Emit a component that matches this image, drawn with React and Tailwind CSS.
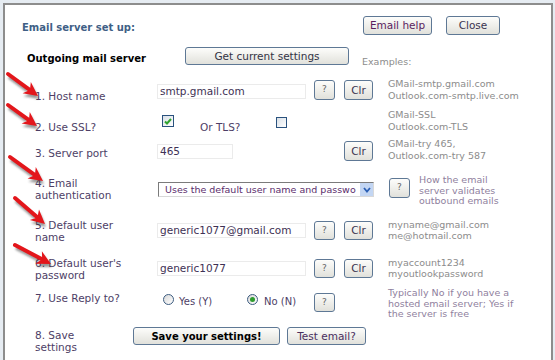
import { twMerge } from "tailwind-merge";

function Btn({ className = "", children }) {
  return (
    <div
      className={twMerge(
        "flex shrink-0 items-center justify-center rounded-[3px] border border-[#5e7895] bg-linear-to-b from-[#fdfdfb] to-[#e1e1db] text-[10.5px] leading-none text-[#3b3450]",
        className
      )}
    >
      {children}
    </div>
  );
}

function Field({ className = "", children }) {
  return (
    <div
      className={twMerge(
        "flex h-[15px] shrink-0 items-center border border-[#ebebeb] bg-white pl-[2px] text-[10.5px] leading-none text-[#3e3154]",
        className
      )}
    >
      {children}
    </div>
  );
}

function Label({ className = "", children }) {
  return (
    <div
      className={twMerge(
        "ml-[30px] w-[122px] shrink-0 text-[10.5px] leading-[12px] text-[#4d3e66]",
        className
      )}
    >
      {children}
    </div>
  );
}

function Note({ className = "", lines }) {
  return (
    <div
      className={twMerge(
        "shrink-0 whitespace-nowrap text-[9.5px] leading-[11.5px] text-[#8c8c8c]",
        className
      )}
    >
      {lines.map((l) => (
        <div key={l}>{l}</div>
      ))}
    </div>
  );
}

function Check({ checked, className = "" }) {
  return (
    <div
      className={twMerge(
        "flex h-[12px] w-[12px] shrink-0 items-center justify-center border border-[#2a527e] bg-linear-to-br from-[#d9e0e7] to-white",
        className
      )}
    >
      {checked && (
        <svg width="8" height="7" viewBox="0 0 8 7">
          <path d="M1 3.5 L3 5.5 L7 1" stroke="#2fa32f" strokeWidth="2" fill="none" />
        </svg>
      )}
    </div>
  );
}

function Radio({ checked }) {
  return (
    <div className="flex h-[11px] w-[11px] shrink-0 items-center justify-center rounded-full border border-[#3c5c80] bg-linear-to-br from-[#d8d8d8] to-white">
      {checked && <div className="h-[5px] w-[5px] rounded-full bg-[#2e9c2e]" />}
    </div>
  );
}

// red callout arrow, tail -> tip, with a soft shadow under it
function Arrow({ x1, y1, x2, y2 }) {
  const dx = x2 - x1;
  const dy = y2 - y1;
  const len = Math.hypot(dx, dy);
  const ux = dx / len;
  const uy = dy / len;
  const px = -uy;
  const py = ux;
  const hl = 14;
  const hw = 7;
  const bx = x2 - ux * hl;
  const by = y2 - uy * hl;
  const head = (ox, oy) =>
    `${x2 + ox},${y2 + oy} ${bx + px * hw + ox},${by + py * hw + oy} ${bx + ux * 4 + ox},${by + uy * 4 + oy} ${bx - px * hw + ox},${by - py * hw + oy}`;
  return (
    <g>
      <g filter="url(#blur)" opacity="0.5">
        <line x1={x1 + 1} y1={y1 + 3} x2={bx + 1} y2={by + 3} stroke="#333" strokeWidth="3.5" />
        <polygon points={head(1, 3)} fill="#333" />
      </g>
      <line x1={x1} y1={y1} x2={bx + ux * 5} y2={by + uy * 5} stroke="#e3161b" strokeWidth="4" strokeLinecap="round" />
      <polygon points={head(0, 0)} fill="#e3161b" />
    </g>
  );
}

const arrows = [
  [8, 74, 38, 96],
  [8, 105, 37, 126],
  [10, 157, 43, 181],
  [15, 198, 45, 224],
  [15, 245, 51, 264],
];

export default function App() {
  return (
    <div className="relative h-[360px] w-[555px] overflow-hidden bg-[#e6ecf2] pl-[3px] pr-[2px] pt-[3px] font-['DejaVu_Sans',Verdana,sans-serif]">
      <div className="h-full border-x-2 border-t-2 border-[#8d8d8d] bg-white pt-[11px]">
        {/* header */}
        <div className="flex h-[31px]">
          <div className="ml-[17px] mt-[6px] w-[341px] text-[10px] font-bold leading-[12px] text-[#3f5f86]">
            Email server set up:
          </div>
          <Btn className="h-[19px] w-[69px] text-[#5a1d5e]">Email help</Btn>
          <Btn className="ml-[14px] h-[19px] w-[54px]">Close</Btn>
        </div>

        {/* outgoing */}
        <div className="flex h-[31px]">
          <div className="ml-[22px] mt-[6px] w-[158px] text-[10px] font-bold leading-[12px] text-black">
            Outgoing mail server
          </div>
          <Btn className="h-[18px] w-[164px] text-[#333344]">Get current settings</Btn>
          <div className="ml-[13px] mt-[9px] text-[9.5px] leading-[12px] text-[#8c8c8c]">Examples:</div>
        </div>

        {/* 1 */}
        <div className="flex h-[34px]">
          <Label className="mt-[12px]">1. Host name</Label>
          <Field className="mt-[6px] w-[149px]">smtp.gmail.com</Field>
          <Btn className="ml-[8px] mt-[2px] h-[20px] w-[21px] text-[9px] text-[#666]">?</Btn>
          <Btn className="ml-[9px] mt-[2px] h-[20px] w-[29px]">Clr</Btn>
          <Note className="ml-[15px]" lines={["GMail-smtp.gmail.com", "Outlook.com-smtp.live.com"]} />
        </div>

        {/* 2 */}
        <div className="flex h-[29px]">
          <Label className="mt-[9px]">2. Use SSL?</Label>
          <div className="flex w-[231px] shrink-0">
            <div className="w-[43px] pl-[5px] pt-[3px]">
              <Check checked />
            </div>
            <div className="mt-[9px] w-[76px] text-[10.5px] leading-[12px] text-[#4d3e66]">Or TLS?</div>
            <Check className="mt-[5px] h-[11px] w-[11px]" />
          </div>
          <Note className="-mt-[3px]" lines={["GMail-SSL", "Outlook.com-TLS"]} />
        </div>

        {/* 3 */}
        <div className="flex h-[35px]">
          <Label className="mt-[6px]">3. Server port</Label>
          <div className="flex w-[231px] shrink-0">
            <Field className="mt-[3px] w-[76px]">465</Field>
            <Btn className="ml-[111px] h-[20px] w-[29px]">Clr</Btn>
          </div>
          <Note className="-mt-[3px]" lines={["GMail-try 465,", "Outlook.com-try 587"]} />
        </div>

        {/* 4 */}
        <div className="flex h-[43px]">
          <Label className="mt-[1px]">
            4. Email
            <br />
            authentication
          </Label>
          <div className="ml-[1px] mt-[6px] flex h-[15px] w-[216px] shrink-0 items-center border border-t-[#7b7b7b] border-l-[#7b7b7b] border-r-[#d8d8d8] border-b-[#d8d8d8] bg-white pl-[6px] text-[9.5px] leading-none text-[#5a2c6c]">
            <span className="flex-1 whitespace-nowrap">Uses the default user name and passwo</span>
            <div className="flex h-[13px] w-[13px] shrink-0 items-center justify-center bg-[#c3d6f3]">
              <svg width="8" height="6" viewBox="0 0 8 6">
                <path d="M1 1 L4 4.5 L7 1" stroke="#2b5fb4" strokeWidth="1.8" fill="none" />
              </svg>
            </div>
          </div>
          <Btn className="ml-[15px] mt-[2px] h-[20px] w-[21px] text-[9px] text-[#666]">?</Btn>
          <Note
            className="ml-[9px] -mt-[1px] leading-[10.5px] text-[#8f7f9e]"
            lines={["How the email", "server validates", "outbound emails"]}
          />
        </div>

        {/* 5 */}
        <div className="flex h-[38px]">
          <Label>
            5. Default user
            <br />
            name
          </Label>
          <Field className="mt-[4px] w-[149px]">generic1077@gmail.com</Field>
          <Btn className="ml-[8px] mt-[2px] h-[19px] w-[21px] text-[9px] text-[#666]">?</Btn>
          <Btn className="ml-[9px] mt-[2px] h-[19px] w-[29px]">Clr</Btn>
          <Note className="ml-[15px] leading-[11px]" lines={["myname@gmail.com", "me@hotmail.com"]} />
        </div>

        {/* 6 */}
        <div className="flex h-[33px]">
          <Label>
            6. Default user's
            <br />
            password
          </Label>
          <Field className="mt-[4px] w-[149px]">generic1077</Field>
          <Btn className="ml-[8px] mt-[2px] h-[19px] w-[21px] text-[9px] text-[#666]">?</Btn>
          <Btn className="ml-[9px] mt-[2px] h-[19px] w-[29px]">Clr</Btn>
          <Note className="ml-[15px] leading-[11px]" lines={["myaccount1234", "myoutlookpassword"]} />
        </div>

        {/* 7 */}
        <div className="flex h-[34px]">
          <Label className="mt-[2px]">7. Use Reply to?</Label>
          <div className="flex w-[231px] shrink-0">
            <div className="mt-[4px] flex w-[90px] items-start pl-[6px]">
              <Radio />
              <span className="ml-[5px] mt-[2px] text-[10px] leading-[12px] text-[#4d3e66]">Yes (Y)</span>
            </div>
            <div className="mt-[4px] flex w-[67px] items-start">
              <Radio checked />
              <span className="ml-[6px] mt-[2px] text-[10px] leading-[12px] text-[#4d3e66]">No (N)</span>
            </div>
            <Btn className="mt-[3px] h-[19px] w-[21px] text-[9px] text-[#666]">?</Btn>
          </div>
          <Note
            className="-mt-[2px] leading-[10.5px] text-[#8f7f9e]"
            lines={["Typically No if you have a", "hosted email server; Yes if", "the server is free"]}
          />
        </div>

        {/* 8 */}
        <div className="flex h-[36px]">
          <Label className="mt-[5px] w-[98px]">
            8. Save
            <br />
            settings
          </Label>
          <Btn className="mt-[3px] h-[18px] w-[147px] text-[10px] font-bold text-black">Save your settings!</Btn>
          <Btn className="ml-[7px] mt-[3px] h-[18px] w-[79px] text-[#4a2f5e]">Test email?</Btn>
        </div>
      </div>

      <svg className="pointer-events-none absolute left-0 top-0" width="70" height="360">
        <defs>
          <filter id="blur" x="-50%" y="-50%" width="200%" height="200%">
            <feGaussianBlur stdDeviation="1.2" />
          </filter>
        </defs>
        {arrows.map(([a, b, c, d]) => (
          <Arrow key={b} x1={a} y1={b} x2={c} y2={d} />
        ))}
      </svg>
    </div>
  );
}
